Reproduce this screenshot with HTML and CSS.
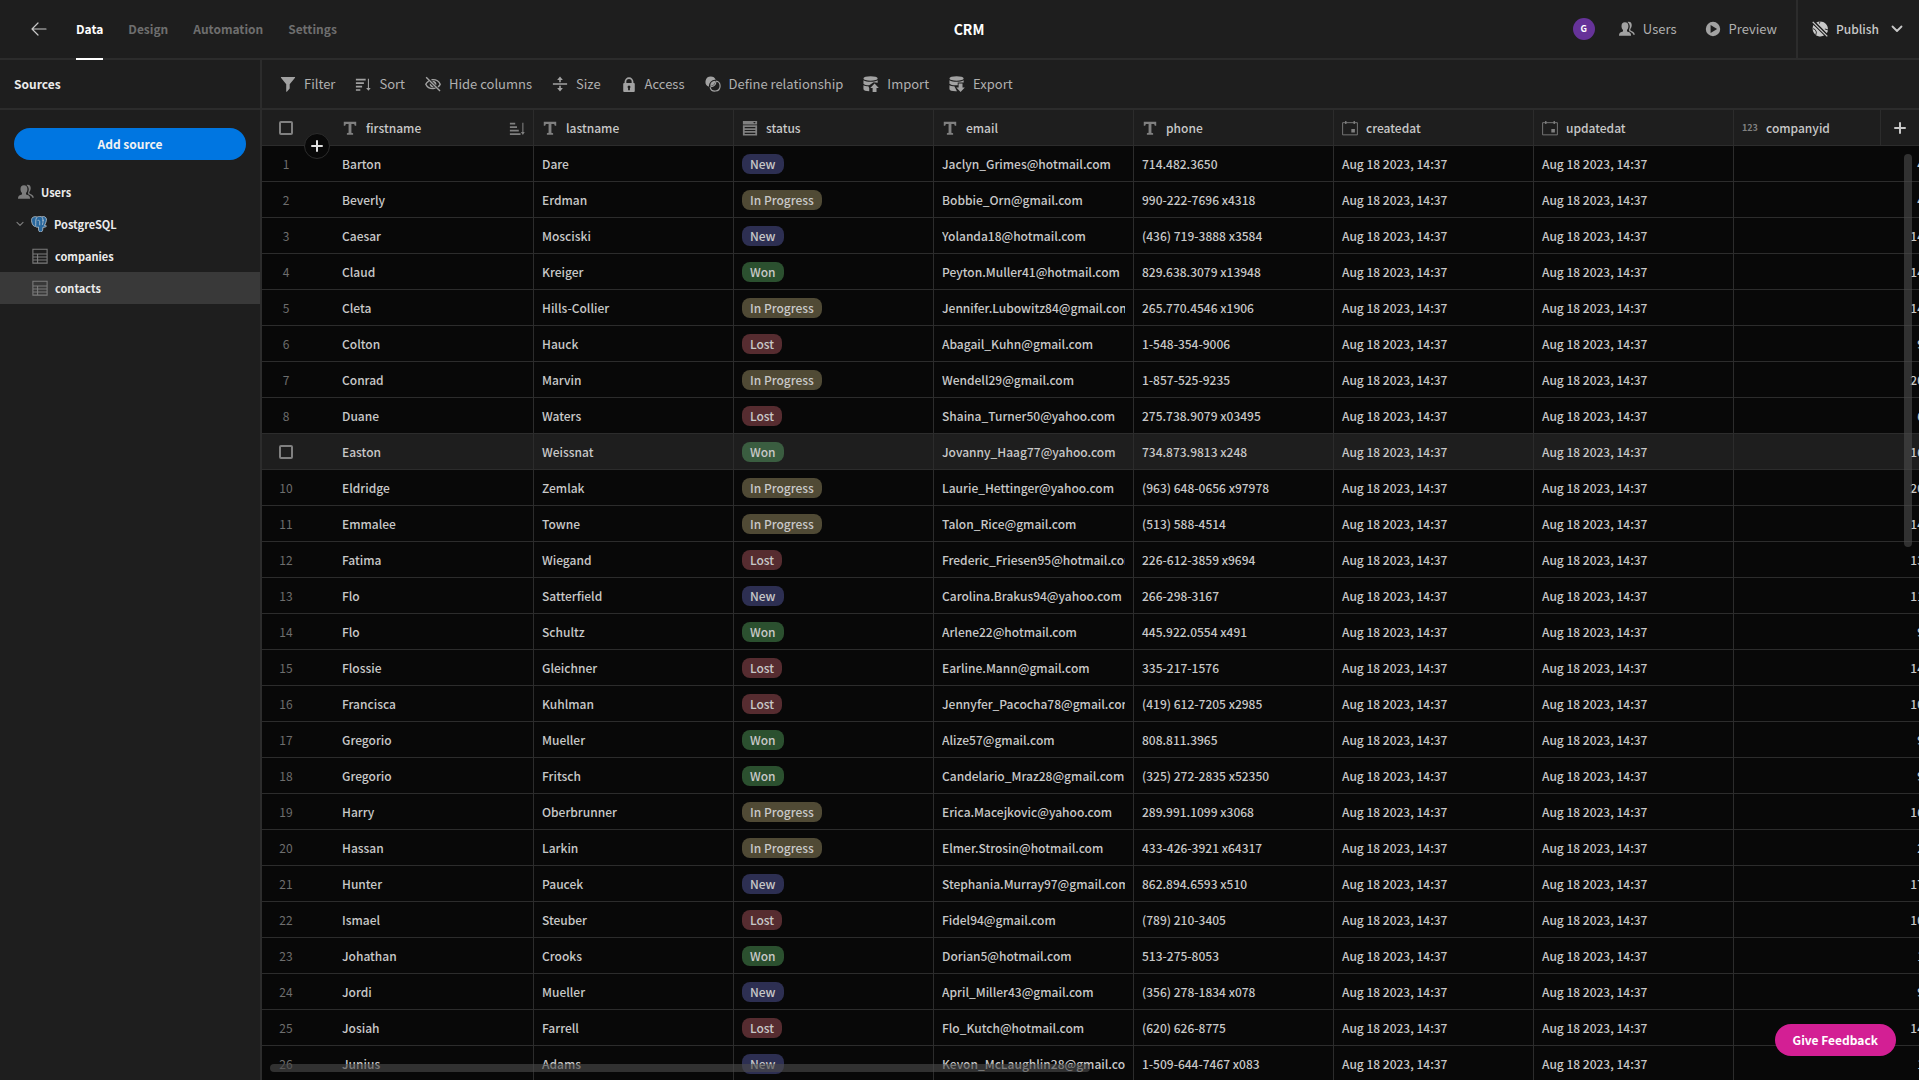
FILE: index.html
```html
<!DOCTYPE html>
<html lang="en">
<head>
<meta charset="utf-8">
<meta name="viewport" content="width=device-width, initial-scale=1">
<title>CRM</title>
<link rel="stylesheet" href="styles.css">
</head>
<body>
<svg class="sprite" aria-hidden="true">
  <symbol id="i-text" viewBox="0 0 18 18"><path d="M2 2h14v4.500h-1.700c0-1.600-.4-2.100-1.700-2.100h-2v9.400c0 .7.400.9 1.900 1V16.500h-7v-1.700c1.500-.1 1.900-.3 1.900-1V4.400h-2c-1.300 0-1.700.5-1.700 2.100H2z"/></symbol>
  <symbol id="i-filter" viewBox="0 0 18 18"><path d="M1.500 1h15c.5 0 .7.600.4 1l-6 7.300V14l-3.200 3.600c-.3.300-.7.100-.7-.3V9.300L1.100 2c-.3-.4-.1-1 .4-1z"/></symbol>
  <symbol id="i-sort" viewBox="0 0 18 18"><path d="M1 3h11v2H1zM1 7h9v2H1zM1 11h7v2H1zM1 15h5v1.500H1z"/><path d="M14.500 3h1.200v10.500h2L15.100 16.500l-2.600-3h2z"/></symbol>
  <symbol id="i-sort-asc" viewBox="0 0 18 18"><path d="M1 3h6v2H1zM1 7h8v2H1zM1 11h10v2H1zM1 15h12v2H1z"/><path d="M15 3h1.200v10.500h1.500L15.600 16.800l-2.200-3.300H15z"/></symbol>
  <symbol id="i-hide" viewBox="0 0 18 18"><path fill="none" stroke="currentColor" stroke-width="1.600" d="M4.200 5.700C2.600 6.700 1.300 8.200.9 9.200c1.200 2.600 4.400 5 8.100 5 1 0 2-.2 2.800-.5M7.300 4.300C7.800 4.200 8.400 4.100 9 4.100c3.700 0 6.900 2.500 8.100 5.100-.4 1-1.300 2.200-2.500 3.100M1.300 1.300l15.600 15.500"/><path d="M9.200 5.400a3.800 3.800 0 0 1 3.400 5.100L8 5.700zM5.400 8.100l4.700 4.600A3.700 3.700 0 0 1 5.400 8.100z"/></symbol>
  <symbol id="i-size" viewBox="0 0 18 18"><path d="M1 8.200h16v1.700H1zM8.100 4.500V7h1.800V4.500h2.300L9 .5l-3.200 4zM8.100 13.500V11h1.800v2.500h2.300l-3.200 4-3.200-4z"/></symbol>
  <symbol id="i-lock" viewBox="0 0 18 18"><path fill-rule="evenodd" d="M14.500 8H14V6.500a5 5 0 0 0-10 0V8h-.5a1 1 0 0 0-1 1v8a1 1 0 0 0 1 1h11a1 1 0 0 0 1-1V9a1 1 0 0 0-1-1zM6 6.500a3 3 0 0 1 6 0V8H6zm4 7.200V16H8v-2.300a1.600 1.600 0 1 1 2 0z"/></symbol>
  <symbol id="i-relation" viewBox="0 0 18 18"><path d="M6.500.5a6 6 0 0 1 5.600 3.800A7 7 0 0 0 4.400 12.100 6 6 0 0 1 6.500.5z"/><path fill="none" stroke="currentColor" stroke-width="1.300" d="M12.100 5.600a5.700 5.700 0 1 1-6.400 6.800M6.100 11.900c4 .3 6.300-2.500 6.100-6"/><path d="M11.300 5.300c.5 3.200-2 6-5.400 5.800-.1-3.500 2-5.700 5.400-5.800z"/></symbol>
  <symbol id="i-import" viewBox="0 0 18 18"><ellipse cx="8.500" cy="2.800" rx="8" ry="2.600"/><path d="M.5 4.700c2 1.500 5 1.700 8 1.700s6-.4 8-1.700v3L12 6.900 7 10.400C4 10.300 1.500 9.700.5 8.600zM.5 10.300c1.500.9 3.500 1.200 5.500 1.300l1 1.800v3.800c-3.500-.1-6.500-1-6.500-2.600z"/><path d="M13 8.300l4.800 5.200h-2.600V18h-4.400v-4.500H8.200z"/></symbol>
  <symbol id="i-export" viewBox="0 0 18 18"><ellipse cx="8.500" cy="2.800" rx="8" ry="2.600"/><path d="M.5 4.700c2 1.500 5 1.700 8 1.700s6-.4 8-1.700v2.500H9.800v3.200C5 10.700 1.500 9.700.5 8.600zM.5 10.300c1.500.9 3.500 1.200 5.500 1.300l3 5.500C4 17.400.5 16.400.5 14.600z"/><path d="M13 18l4.800-5.200h-2.600V8.300h-4.400v4.500H8.200z"/></symbol>
  <symbol id="i-options" viewBox="0 0 18 18"><path fill-rule="evenodd" d="M1 1h16v4H1zm11.500 1.300L14 4l1.500-1.700zM1 6h16v11.500H1zm2 2v1.300h12V8zm0 3.200v1.300h12v-1.300zm0 3.200v1.300h12v-1.300z"/></symbol>
  <symbol id="i-date" viewBox="0 0 18 18"><path fill="none" stroke="currentColor" d="M.7 3h16.600v13.700H.7z"/><path d="M3.500 1h1.500v3.500H3.500zM13 1h1.500v3.500H13zM10.500 10h4v4h-4z"/></symbol>
  <symbol id="i-users" viewBox="0 0 18 18"><path d="M6.700 1.500c2.600 0 3.900 1.800 3.900 4.300 0 1.700-.7 3.300-1.600 4.200v1.200c0 .5.300.7.900.9 2.600.8 3.700 1.700 3.700 4.400H0c0-2.700 1-3.600 3.600-4.400.6-.2.900-.4.900-.9V10c-.9-.9-1.700-2.500-1.700-4.200 0-2.500 1.300-4.300 3.900-4.300z"/><path d="M9.500 1.200c3.300-.9 5 1.100 4.800 4-.1 1.700-.7 3-1.600 4v1.100c1.200 1 4.900 1.500 5.100 5.100l-1.600.1c-1-2.600-3-3.300-4.800-4V9.300C12.300 7.800 13 4 9.500 1.200z"/></symbol>
  <symbol id="i-play" viewBox="0 0 18 18"><path fill-rule="evenodd" d="M9 .9a8.100 8.100 0 1 0 0 16.200A8.100 8.100 0 0 0 9 .9zM6.300 4.600v8.800L13.600 9z"/></symbol>
  <symbol id="i-globe-off" viewBox="0 0 18 18"><path d="M1.700 4.200C-.3 8.200.6 13 4.200 15.700c3 2.200 7.300 2.200 10.200.1zM4.800 1.800C8.200-.2 12.600.2 15.400 3c3 3 3.200 7.500 1.300 10.900z"/><path fill="none" stroke="#1e1e1e" d="M1 8.500l2.500 1.200L5 12.500l-.8 3.500M9 .5L8.300 3M14.500 9l3.500 1"/><path fill="none" stroke="#1e1e1e" stroke-width="3.600" d="M.8 1l16.400 16.300"/><path fill="none" stroke="currentColor" stroke-width="1.500" d="M.8 1l16.400 16.300"/></symbol>
  <symbol id="i-table" viewBox="0 0 18 18"><path fill="none" stroke="currentColor" stroke-width="1.200" d="M1 1.500h16v15.500H1zM1 6.700h16M1 10.200h16M1 13.600h16M6.300 6.700V17"/></symbol>
  <symbol id="i-chevron" viewBox="0 0 12 8"><path fill="none" stroke="currentColor" stroke-width="1.800" stroke-linecap="round" stroke-linejoin="round" d="M1.500 1.500L6 6l4.500-4.500"/></symbol>
  <symbol id="i-plus" viewBox="0 0 16 16"><path fill="none" stroke="currentColor" stroke-width="2" stroke-linecap="round" d="M8 3v10M3 8h10"/></symbol>
  <symbol id="i-back" viewBox="0 0 16 16"><path fill="none" stroke="currentColor" stroke-width="1.200" stroke-linecap="round" stroke-linejoin="round" d="M15 8H1M7 2L1 8l6 6"/></symbol>
  <symbol id="i-postgres" viewBox="0 0 18 18"><path fill="#28679d" stroke="#c3ccd3" stroke-width=".9" d="M1 2.600C2.500.5 5 .4 6.800 1.200 9 .2 11 .2 12.300 1c2-.9 4.500-.1 5 2.300.4 2-1 5.200-2.200 7.400 1 .2 2 0 2.300.7-.9 1-2 1.300-4 1.300-.2 3.300-.4 5.300-2.600 5.300-2.500 0-2.300-2.600-2.400-5.600-1.500.6-3-.1-3.400-.7C1.800 12.300-.2 5.500 1 2.600z"/><path fill="none" stroke="#c3ccd3" stroke-width=".9" d="M6.300 1.800C5 4 5.500 7 5.300 11M7.500 5c1-.4 2.300 0 2.300 1.200v4.300M12.500 1.500c1.300 2 1.500 4.500.3 8.500M12.800 5l1.600-.2"/></symbol>
</svg>

<div class="app">
  <header class="topbar">
    <nav class="tabs">
      <a class="back" href="#apps" aria-label="Back"><svg class="icon-16"><use href="#i-back"/></svg></a>
      <a class="tab is-selected" href="#data">Data</a>
      <a class="tab" href="#design">Design</a>
      <a class="tab" href="#automation">Automation</a>
      <a class="tab" href="#settings">Settings</a>
    </nav>
    <h1 class="app-name">CRM</h1>
    <div class="actions">
      <span class="avatar">G</span>
      <button class="action" type="button"><svg class="icon-16"><use href="#i-users"/></svg>Users</button>
      <button class="action" type="button"><svg class="icon-16"><use href="#i-play"/></svg>Preview</button>
      <button class="action publish" type="button"><svg class="icon-16"><use href="#i-globe-off"/></svg>Publish<svg class="caret"><use href="#i-chevron"/></svg></button>
    </div>
  </header>

  <div class="body">
    <aside class="sidebar">
      <h2 class="panel-title">Sources</h2>
      <div class="panel-body">
        <button class="add-source" type="button">Add source</button>
      </div>
      <nav class="tree">
        <a class="node" href="#users"><svg class="icon-16"><use href="#i-users"/></svg>Users</a>
        <a class="node node-source" href="#postgresql"><svg class="caret-small"><use href="#i-chevron"/></svg><svg class="icon-16"><use href="#i-postgres"/></svg>PostgreSQL</a>
        <a class="node node-table" href="#companies"><svg class="icon-16"><use href="#i-table"/></svg>companies</a>
        <a class="node node-table is-selected" href="#contacts"><svg class="icon-16"><use href="#i-table"/></svg>contacts</a>
      </nav>
    </aside>

    <main class="main">
      <div class="toolbar">
        <button class="tool" type="button"><svg class="icon-16"><use href="#i-filter"/></svg>Filter</button>
        <button class="tool" type="button"><svg class="icon-16"><use href="#i-sort"/></svg>Sort</button>
        <button class="tool" type="button"><svg class="icon-16"><use href="#i-hide"/></svg>Hide columns</button>
        <button class="tool" type="button"><svg class="icon-16"><use href="#i-size"/></svg>Size</button>
        <button class="tool" type="button"><svg class="icon-16"><use href="#i-lock"/></svg>Access</button>
        <button class="tool" type="button"><svg class="icon-16"><use href="#i-relation"/></svg>Define relationship</button>
        <button class="tool" type="button"><svg class="icon-16"><use href="#i-import"/></svg>Import</button>
        <button class="tool" type="button"><svg class="icon-16"><use href="#i-export"/></svg>Export</button>
      </div>
      <div class="grid">
        <table class="grid-table">
          <colgroup><col class="col-gutter"><col><col><col><col><col><col><col><col></colgroup>
          <thead>
            <tr>
              <th class="gutter"><input class="check" type="checkbox" aria-label="Select all rows"></th>
              <th><div class="head"><svg class="icon-16"><use href="#i-text"/></svg>firstname<svg class="icon-16 sorted"><use href="#i-sort-asc"/></svg></div></th>
              <th><div class="head"><svg class="icon-16"><use href="#i-text"/></svg>lastname</div></th>
              <th><div class="head"><svg class="icon-16"><use href="#i-options"/></svg>status</div></th>
              <th><div class="head"><svg class="icon-16"><use href="#i-text"/></svg>email</div></th>
              <th><div class="head"><svg class="icon-16"><use href="#i-text"/></svg>phone</div></th>
              <th><div class="head"><svg class="icon-16"><use href="#i-date"/></svg>createdat</div></th>
              <th><div class="head"><svg class="icon-16"><use href="#i-date"/></svg>updatedat</div></th>
              <th><div class="head"><span class="number-icon">123</span>companyid</div></th>
            </tr>
          </thead>
          <tbody id="rows"></tbody>
        </table>
        <button class="add-column" type="button" aria-label="Add column"><svg class="icon-16"><use href="#i-plus"/></svg></button>
        <button class="add-row" type="button" aria-label="Add row"><svg class="icon-16"><use href="#i-plus"/></svg></button>
        <div class="scrollbar scrollbar-v"></div>
        <div class="scrollbar scrollbar-h"></div>
      </div>
    </main>
  </div>
  <button class="feedback" type="button">Give Feedback</button>
</div>
<script src="grid.js"></script>
</body>
</html>
```

FILE: styles.css
```css
:root {
  --bg: #1e1e1e;
  --bg-row: #080808;
  --line: #2c2c2c;
  --text: #c8c8c8;
  --text-strong: #ebebeb;
  --text-dim: #6e6e6e;
  --icon: #a2a2a2;
}

* {
  box-sizing: border-box;
}

body {
  margin: 0;
  background: var(--bg);
  color: var(--text);
  font: 400 13px/20px "Noto Sans CJK SC", "Noto Sans", sans-serif;
}

button {
  margin: 0;
  padding: 0;
  border: 0;
  background: none;
  color: inherit;
  font: inherit;
  cursor: pointer;
}

a {
  color: inherit;
  text-decoration: none;
}

svg {
  flex: none;
  fill: currentColor;
}

.sprite {
  display: none;
}

.icon-16 {
  width: 16px;
  height: 16px;
}

.app {
  display: flex;
  flex-direction: column;
  height: 100vh;
  overflow: hidden;
}

/* Top bar */
.topbar {
  display: grid;
  grid-template-columns: 1fr auto 1fr;
  flex: none;
  height: 60px;
  padding-left: 19px;
  border-bottom: 2px solid var(--line);
}

.tabs {
  display: flex;
  gap: 25px;
  padding-left: 12px;
}

.back {
  display: flex;
  align-items: center;
  margin-right: 4px;
}

.tab {
  margin-bottom: -2px;
  border-bottom: 2px solid transparent;
  color: var(--text-dim);
  font-size: 12px;
  font-weight: 700;
  line-height: 58px;
}

.tab.is-selected {
  border-color: #fff;
  color: #fff;
}

.app-name {
  margin: 0;
  color: #fff;
  font-size: 14px;
  font-weight: 700;
  line-height: 58px;
}

.actions {
  display: flex;
  align-items: center;
  justify-content: flex-end;
}

.avatar {
  width: 22px;
  height: 22px;
  margin-right: 24px;
  border-radius: 50%;
  background: #663399;
  color: #fff;
  font-size: 9px;
  font-weight: 700;
  line-height: 22px;
  text-align: center;
}

.action {
  display: flex;
  align-items: center;
  gap: 8px;
  margin-right: 28px;
  color: #b0b0b0;
}

.publish {
  height: 58px;
  margin: 0 0 0 -9px;
  padding: 0 16px 0 14px;
  border-left: 2px solid var(--line);
  color: var(--text);
  font-size: 12px;
  font-weight: 500;
}

.caret {
  width: 12px;
  height: 8px;
  margin-left: 4px;
}

/* Sources panel */
.body {
  display: flex;
  flex: 1;
  min-height: 0;
}

.sidebar {
  flex: none;
  width: 262px;
  border-right: 2px solid var(--line);
}

.panel-title {
  margin: 0;
  padding: 14px;
  border-bottom: 2px solid var(--line);
  color: var(--text-strong);
  font-size: 12px;
  font-weight: 700;
  line-height: 20px;
}

.panel-body {
  padding: 18px 14px 16px;
}

.add-source {
  width: 100%;
  height: 32px;
  border-radius: 16px;
  background: #0076e1;
  color: #f2f2f2;
  font-size: 12px;
  font-weight: 700;
}

.node {
  display: flex;
  align-items: center;
  gap: 7px;
  height: 32px;
  padding-left: 18px;
  color: var(--text-strong);
  font-size: 11px;
  font-weight: 700;
}

.node svg {
  color: #7c7c7c;
}

.node-source {
  padding-left: 16px;
}

.caret-small {
  width: 8px;
  height: 6px;
}

.node-table {
  padding-left: 32px;
}

.node.is-selected {
  background: #393939;
}

/* Toolbar */
.main {
  display: flex;
  flex: 1;
  flex-direction: column;
  min-width: 0;
}

.toolbar {
  display: flex;
  flex: none;
  gap: 20px;
  height: 50px;
  padding: 0 18px;
  border-bottom: 2px solid var(--line);
}

.tool {
  display: flex;
  align-items: center;
  gap: 8px;
  color: #b0b0b0;
  white-space: nowrap;
}

.tool svg,
.action svg:first-child {
  color: var(--icon);
}

.publish svg:first-child {
  color: var(--text);
}

/* Grid */
.grid {
  position: relative;
  flex: 1;
  min-height: 0;
  overflow: hidden;
  background: var(--bg-row);
}

.grid-table {
  width: 1672px;
  border-collapse: separate;
  border-spacing: 0;
  table-layout: fixed;
  font-size: 12px;
  font-weight: 500;
}

.col-gutter {
  width: 72px;
}

.grid-table th,
.grid-table td {
  height: 36px;
  padding: 0 8px;
  overflow: hidden;
  border-right: 1px solid var(--line);
  border-bottom: 1px solid var(--line);
  font-weight: 500;
  text-align: left;
  white-space: nowrap;
}

.grid-table th {
  background: var(--bg);
}

.grid-table .gutter {
  padding: 0 24px 0 0;
  border-right: 0;
  color: var(--text-dim);
  font-weight: 400;
  text-align: center;
}

.grid-table .number {
  padding-right: 9px;
  text-align: right;
}

.is-hovered td {
  background: var(--bg);
}

.clip {
  overflow: hidden;
}

.head {
  display: flex;
  align-items: center;
  gap: 8px;
}

.head svg,
.number-icon {
  color: #808080;
}

.head .sorted {
  margin-left: auto;
}

.number-icon {
  width: 16px;
  font-size: 9px;
  font-weight: 700;
}

.check {
  display: block;
  width: 14px;
  height: 14px;
  margin: 0 auto;
  border: 2px solid #808080;
  border-radius: 2px;
  appearance: none;
}

.tag {
  display: inline-block;
  padding: 0 8px;
  border-radius: 8px;
  vertical-align: middle;
}

.tag-new {
  background: #2d2f52;
}

.tag-progress {
  background: #504a35;
}

.tag-won {
  background: #2b502f;
}

.is-hovered .tag-won {
  background: #3a5d40;
}

.tag-lost {
  background: #562c30;
}

.add-column {
  display: flex;
  position: absolute;
  top: 0;
  right: 0;
  align-items: center;
  justify-content: center;
  width: 39px;
  height: 36px;
  border-bottom: 1px solid var(--line);
  border-left: 1px solid var(--line);
  background: var(--bg);
}

.add-row {
  display: flex;
  position: absolute;
  top: 23px;
  left: 42px;
  align-items: center;
  justify-content: center;
  width: 26px;
  height: 26px;
  border: 1px solid var(--line);
  border-radius: 50%;
  background: var(--bg-row);
  color: #e0e0e0;
}

.scrollbar {
  position: absolute;
  border-radius: 4px;
  background: rgb(75 75 75 / 62%);
}

.scrollbar-v {
  top: 44px;
  right: 7px;
  width: 8px;
  height: 40.5%;
}

.scrollbar-h {
  bottom: 8px;
  left: 8px;
  width: 49.5%;
  height: 8px;
}

.feedback {
  position: absolute;
  right: 23px;
  bottom: 24px;
  height: 32px;
  padding: 0 18px;
  border-radius: 16px;
  background: #d31f94;
  color: #fff;
  font-size: 12px;
  font-weight: 700;
}
```

FILE: grid.js
```js
const contacts = [
  ["Barton", "Dare", "New", "Jaclyn_Grimes@hotmail.com", "714.482.3650", 4],
  ["Beverly", "Erdman", "In Progress", "Bobbie_Orn@gmail.com", "990-222-7696 x4318", 4],
  ["Caesar", "Mosciski", "New", "Yolanda18@hotmail.com", "(436) 719-3888 x3584", 14],
  ["Claud", "Kreiger", "Won", "Peyton.Muller41@hotmail.com", "829.638.3079 x13948", 14],
  ["Cleta", "Hills-Collier", "In Progress", "Jennifer.Lubowitz84@gmail.com", "265.770.4546 x1906", 14],
  ["Colton", "Hauck", "Lost", "Abagail_Kuhn@gmail.com", "1-548-354-9006", 9],
  ["Conrad", "Marvin", "In Progress", "Wendell29@gmail.com", "1-857-525-9235", 20],
  ["Duane", "Waters", "Lost", "Shaina_Turner50@yahoo.com", "275.738.9079 x03495", 6],
  ["Easton", "Weissnat", "Won", "Jovanny_Haag77@yahoo.com", "734.873.9813 x248", 16],
  ["Eldridge", "Zemlak", "In Progress", "Laurie_Hettinger@yahoo.com", "(963) 648-0656 x97978", 20],
  ["Emmalee", "Towne", "In Progress", "Talon_Rice@gmail.com", "(513) 588-4514", 14],
  ["Fatima", "Wiegand", "Lost", "Frederic_Friesen95@hotmail.com", "226-612-3859 x9694", 13],
  ["Flo", "Satterfield", "New", "Carolina.Brakus94@yahoo.com", "266-298-3167", 11],
  ["Flo", "Schultz", "Won", "Arlene22@hotmail.com", "445.922.0554 x491", 9],
  ["Flossie", "Gleichner", "Lost", "Earline.Mann@gmail.com", "335-217-1576", 14],
  ["Francisca", "Kuhlman", "Lost", "Jennyfer_Pacocha78@gmail.com", "(419) 612-7205 x2985", 10],
  ["Gregorio", "Mueller", "Won", "Alize57@gmail.com", "808.811.3965", 9],
  ["Gregorio", "Fritsch", "Won", "Candelario_Mraz28@gmail.com", "(325) 272-2835 x52350", 9],
  ["Harry", "Oberbrunner", "In Progress", "Erica.Macejkovic@yahoo.com", "289.991.1099 x3068", 16],
  ["Hassan", "Larkin", "In Progress", "Elmer.Strosin@hotmail.com", "433-426-3921 x64317", 2],
  ["Hunter", "Paucek", "New", "Stephania.Murray97@gmail.com", "862.894.6593 x510", 17],
  ["Ismael", "Steuber", "Lost", "Fidel94@gmail.com", "(789) 210-3405", 10],
  ["Johathan", "Crooks", "Won", "Dorian5@hotmail.com", "513-275-8053", 1],
  ["Jordi", "Mueller", "New", "April_Miller43@gmail.com", "(356) 278-1834 x078", 9],
  ["Josiah", "Farrell", "Lost", "Flo_Kutch@hotmail.com", "(620) 626-8775", 14],
  ["Junius", "Adams", "New", "Kevon_McLaughlin28@gmail.com", "1-509-644-7467 x083", 1]
];

const tagClass = { "New": "tag-new", "In Progress": "tag-progress", "Won": "tag-won", "Lost": "tag-lost" };
const hovered = 8;
const date = "Aug 18 2023, 14:37";

document.getElementById("rows").innerHTML = contacts.map(([first, last, status, email, phone, company], i) => `
  <tr${i === hovered ? ' class="is-hovered"' : ""}>
    <td class="gutter">${i === hovered ? '<input class="check" type="checkbox" aria-label="Select row">' : i + 1}</td>
    <td>${first}</td>
    <td>${last}</td>
    <td><span class="tag ${tagClass[status]}">${status}</span></td>
    <td><div class="clip">${email}</div></td>
    <td>${phone}</td>
    <td>${date}</td>
    <td>${date}</td>
    <td class="number">${company}</td>
  </tr>`).join("");
```
